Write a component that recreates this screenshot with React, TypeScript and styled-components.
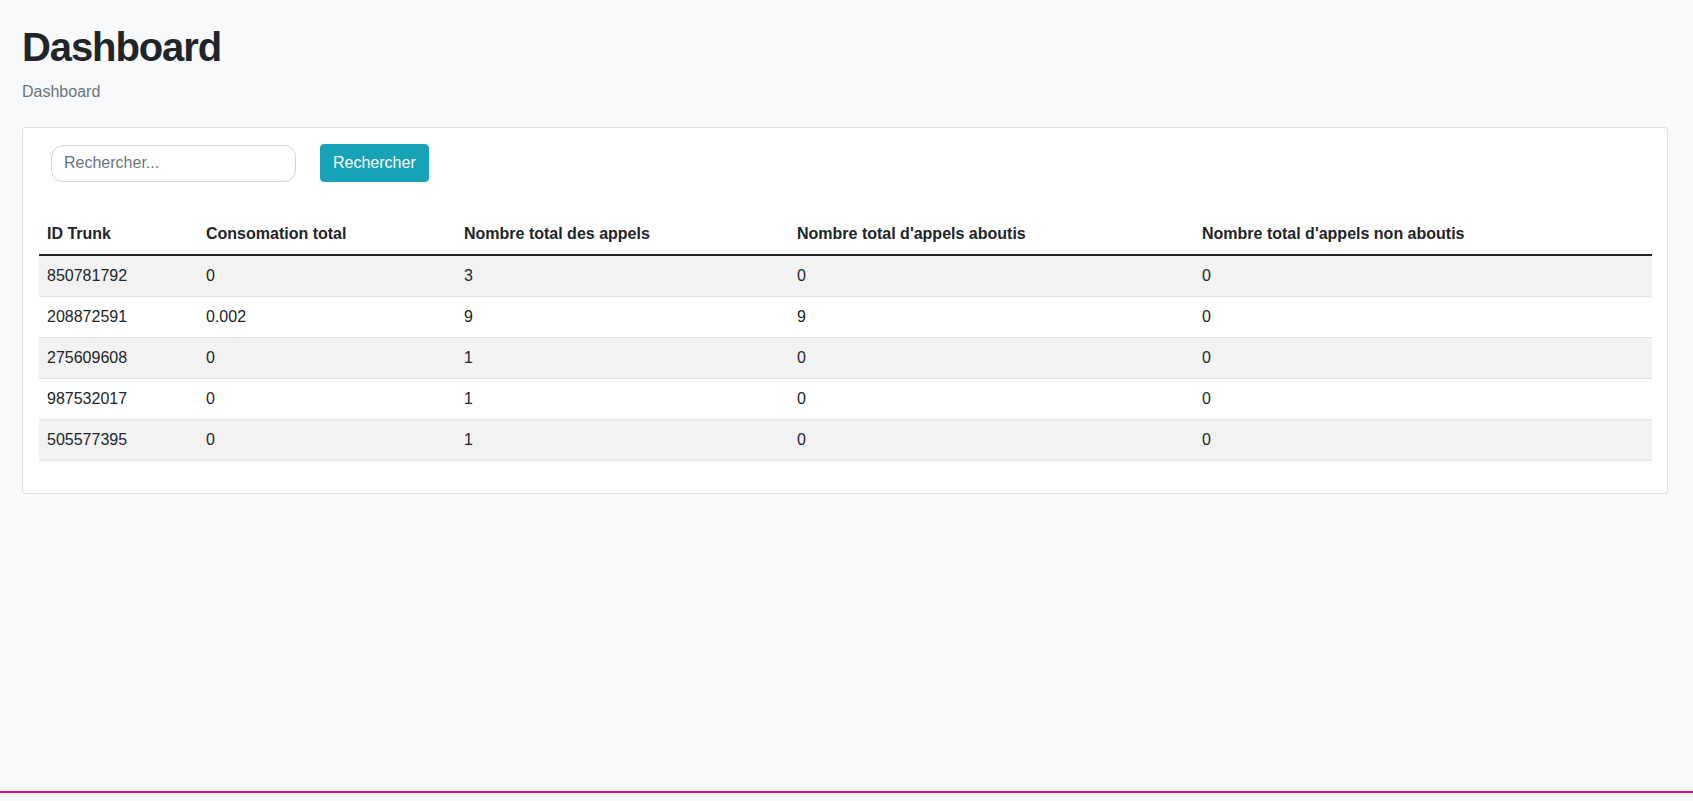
import React from "react";
import styled, { createGlobalStyle } from "styled-components";

const GlobalStyle = createGlobalStyle`
  html, body {
    margin: 0;
    padding: 0;
    background: #f8f9fa;
    color: #212529;
    font-family: "Liberation Sans", Arial, sans-serif;
    font-size: 16px;
    line-height: 1.5;
  }
  * { box-sizing: border-box; }
`;

const Page = styled.div`
  min-height: 801px;
  display: flex;
  flex-direction: column;
`;

const Main = styled.main`
  flex: 1;
  padding: 23px 25px 0 22px;
`;

const Title = styled.h1`
  margin: 0;
  font-size: 40px;
  font-weight: 700;
  letter-spacing: -1.1px;
  line-height: 48px;
  color: #212529;
`;

const Crumb = styled.div`
  margin-top: 9px;
  color: #6c757d;
  font-size: 16px;
  line-height: 24px;
`;

const Card = styled.section`
  margin-top: 23px;
  background: #fff;
  border: 1px solid rgba(0, 0, 0, 0.125);
  border-radius: 4px;
  padding: 16px 15px 16px 16px;
`;

const SearchBar = styled.form`
  display: flex;
  align-items: center;
  gap: 24px;
  padding-left: 12px;
  margin-bottom: 32px;
`;

const SearchInput = styled.input`
  width: 245px;
  height: 37px;
  padding: 6px 12px;
  border: 1px solid #ced4da;
  border-radius: 12px;
  background: #fff;
  font-family: inherit;
  font-size: 16px;
  color: #212529;
  outline: none;
  &::placeholder { color: #6c757d; }
`;

const SearchButton = styled.button`
  height: 38px;
  padding: 6px 12px;
  border: 1px solid #17a2b8;
  border-radius: 4px;
  background: #17a2b8;
  color: #fff;
  font-family: inherit;
  font-size: 16px;
  line-height: 24px;
  cursor: pointer;
`;

const Table = styled.table`
  width: 100%;
  border-collapse: collapse;
  margin-bottom: 16px;
  color: #212529;
`;

const Th = styled.th<{ $w?: number }>`
  text-align: left;
  font-weight: 700;
  padding: 8px;
  line-height: 24px;
  border-bottom: 2px solid #212529;
  width: ${(p) => (p.$w ? `${p.$w}px` : "auto")};
`;

const Row = styled.tr<{ $striped: boolean }>`
  background: ${(p) => (p.$striped ? "#f2f2f2" : "#fff")};
`;

const Td = styled.td`
  padding: 8px;
  line-height: 24px;
  border-bottom: 1px solid #dee2e6;
`;

const Footer = styled.footer`
  height: 10px;
  border-top: 2px solid #ec008c;
`;

const rows = [
  ["850781792", "0", "3", "0", "0"],
  ["208872591", "0.002", "9", "9", "0"],
  ["275609608", "0", "1", "0", "0"],
  ["987532017", "0", "1", "0", "0"],
  ["505577395", "0", "1", "0", "0"],
];

const headers: [string, number | undefined][] = [
  ["ID Trunk", 159],
  ["Consomation total", 258],
  ["Nombre total des appels", 333],
  ["Nombre total d'appels aboutis", 405],
  ["Nombre total d'appels non aboutis", undefined],
];

export default function App() {
  return (
    <>
      <GlobalStyle />
      <Page>
        <Main>
          <Title>Dashboard</Title>
          <Crumb>Dashboard</Crumb>
          <Card>
            <SearchBar onSubmit={(e) => e.preventDefault()}>
              <SearchInput placeholder="Rechercher..." />
              <SearchButton type="submit">Rechercher</SearchButton>
            </SearchBar>
            <Table>
              <thead>
                <tr>
                  {headers.map(([h, w]) => (
                    <Th key={h} $w={w}>
                      {h}
                    </Th>
                  ))}
                </tr>
              </thead>
              <tbody>
                {rows.map((r, i) => (
                  <Row key={r[0]} $striped={i % 2 === 0}>
                    {r.map((c, j) => (
                      <Td key={j}>{c}</Td>
                    ))}
                  </Row>
                ))}
              </tbody>
            </Table>
          </Card>
        </Main>
        <Footer />
      </Page>
    </>
  );
}
